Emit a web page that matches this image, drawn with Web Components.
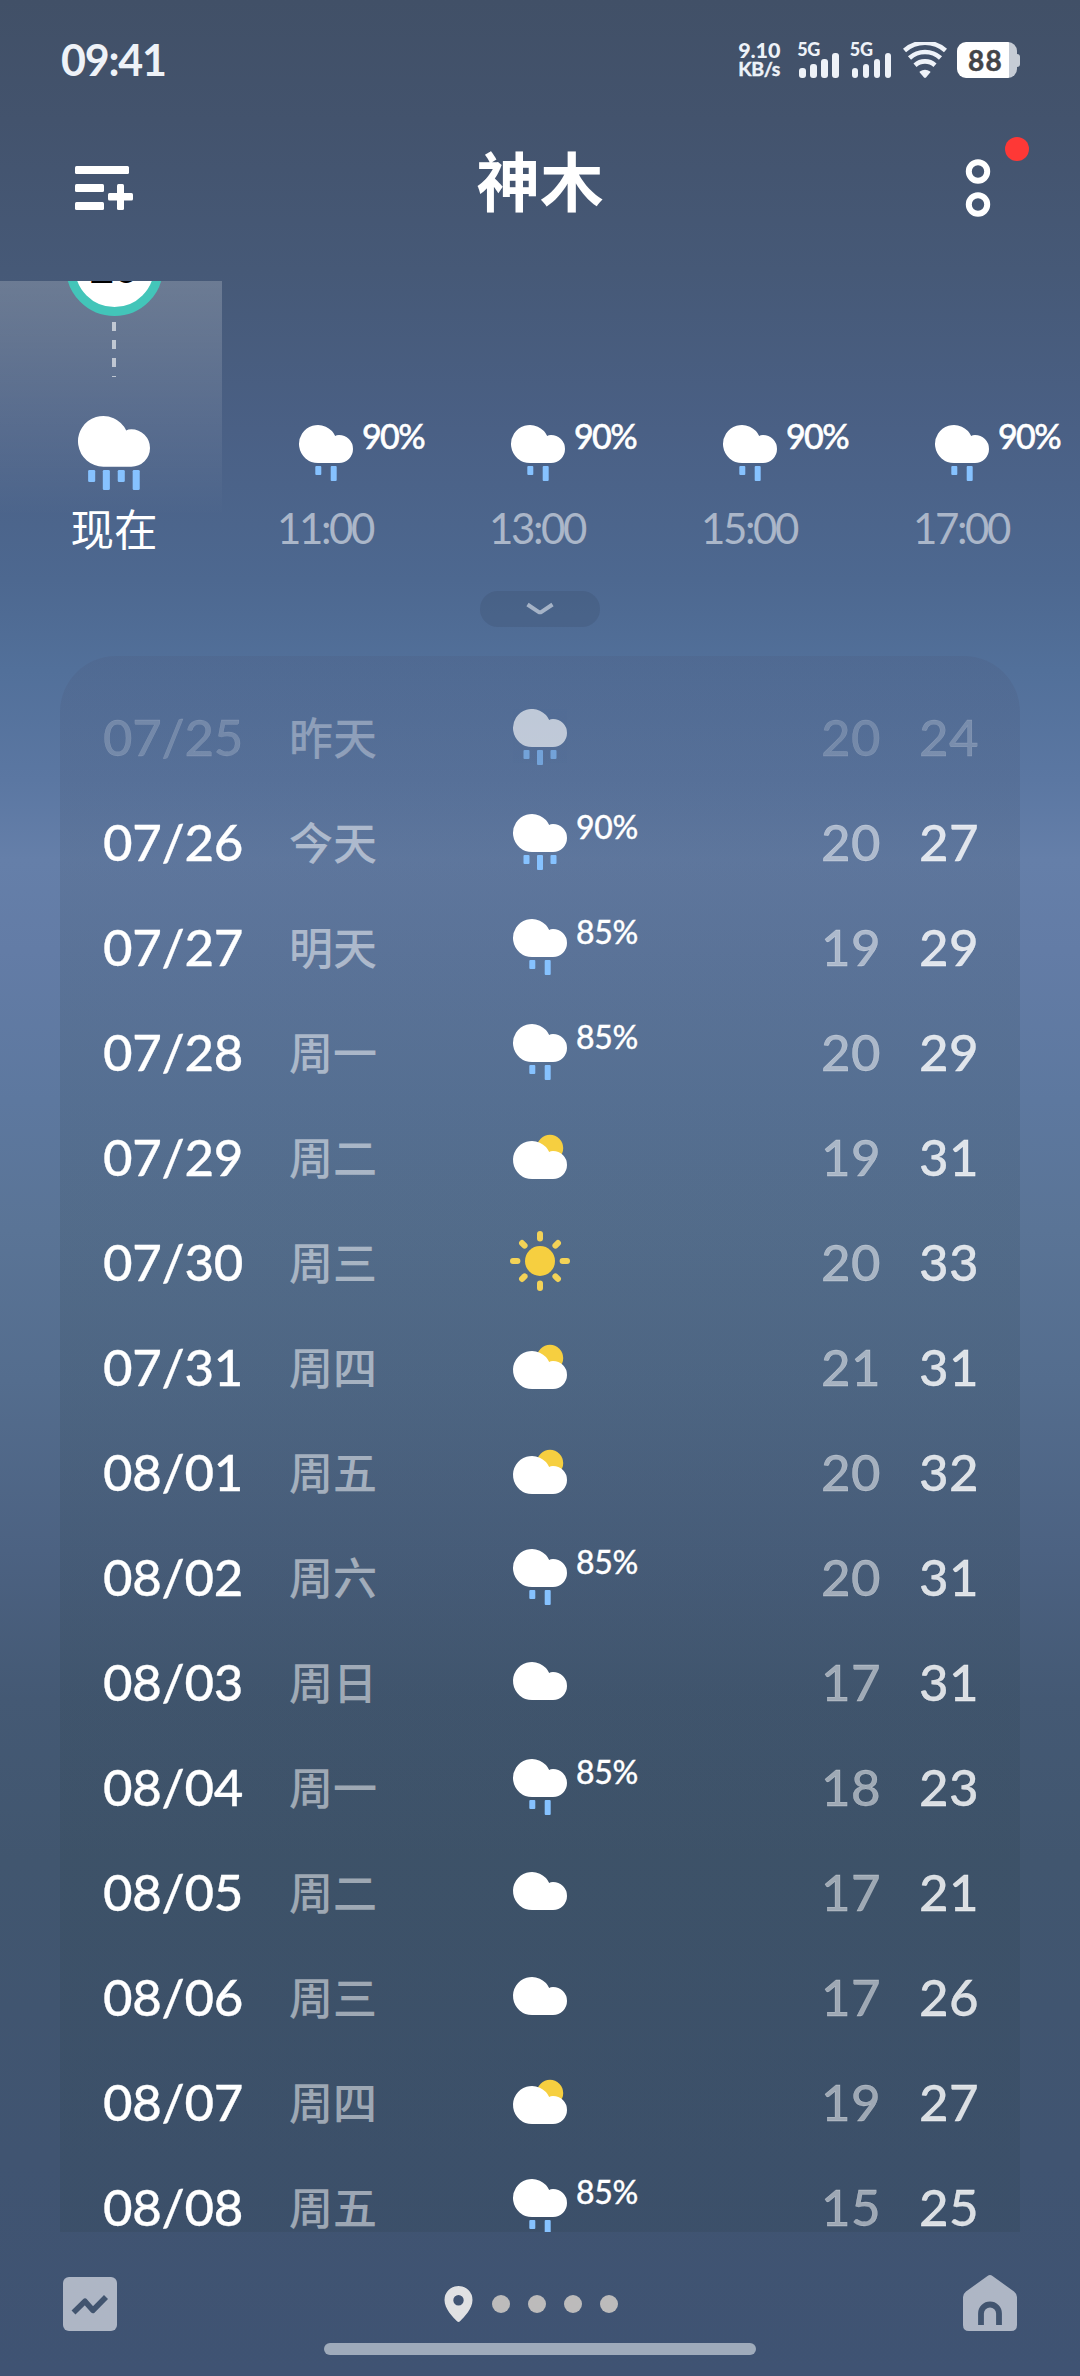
<!DOCTYPE html>
<html lang="zh-CN">
<head>
<meta charset="utf-8">
<title>神木</title>
<style>
html,body{margin:0;padding:0}
body{width:1080px;height:2376px;overflow:hidden;font-family:Lato,"Noto Sans CJK SC",sans-serif;color:#fff}
</style>
</head>
<body>
<weather-app></weather-app>
<script>
class Base extends HTMLElement{
  constructor(){super();this.attachShadow({mode:'open'})}
  connectedCallback(){this.shadowRoot.innerHTML=this.view()}
}
const define=(name,view)=>customElements.define(name,class extends Base{view(){return view(this)}});

const drop=(x,y,long)=>`<rect x="${x-3}" y="${y}" width="6" height="${long?15:9}" rx="1" fill="#86c2ff"/>`;
const cloud=(dy)=>`<path transform="translate(0 ${dy})" fill="#fff" d="M22 41A19 19 0 1 1 39.2 13.9Q40.5 13 43 13A14 14 0 0 1 43 41Z"/>`;
const icons={
  heavy:cloud(0)+`<g fill="#86c2ff"><rect x="10.6" y="43.5" width="5.3" height="9" rx="1"/><rect x="21.6" y="43.5" width="5.3" height="15" rx="1"/><rect x="32.8" y="43.5" width="5.3" height="9" rx="1"/><rect x="44" y="43.5" width="5.3" height="15" rx="1"/></g>`,
  rain3:cloud(0)+drop(16.5,44,0)+drop(30,44,1)+drop(43.5,44,0),
  rain:cloud(0)+drop(22.3,44,0)+drop(37.7,44,1),
  partly:`<circle cx="40" cy="22" r="13.2" fill="#f6cf40"/>`+cloud(12),
  cloudy:cloud(8),
  sun:`<circle cx="30" cy="30" r="15" fill="#f6cf40"/><g stroke="#f3d257" stroke-width="6" stroke-linecap="round">${[0,45,90,135,180,225,270,315].map(a=>`<path d="M30 ${a%90?4.6:3}v${a%90?3.6:4.4}" transform="rotate(${a} 30 30)"/>`).join('')}</g>`
};
define('weather-icon',e=>{
  const s=e.getAttribute('size')||60;
  return `<style>:host{display:block;width:${s}px;height:${s}px}svg{display:block}</style><svg width="${s}" height="${s}" viewBox="0 0 60 60">${icons[e.getAttribute('kind')]}</svg>`;
});

define('signal-bars',()=>`<style>:host{display:flex;flex-direction:column;width:52.7px;height:36px;color:#eef2f8}
b{font:900 18px/14px Lato,sans-serif;height:11px;letter-spacing:-.2px}
div{display:flex;gap:4.5px;align-items:flex-end;height:25px;padding-left:2px}
i{width:6.5px;border-radius:3px;background:#eef2f8}</style>
<b>5G</b><div><i style="height:10px"></i><i style="height:14px"></i><i style="height:19px"></i><i style="height:25px"></i></div>`);

define('status-bar',()=>`<style>:host{display:flex;align-items:flex-start;height:119px;box-sizing:border-box;padding:42px 60px 0 61px;color:#eef2f8}
.t{font:700 43px/36px Lato,sans-serif;letter-spacing:-1.2px;flex:1}
.s{width:59px;font:900 21.5px/20px Lato,sans-serif;letter-spacing:-.1px;margin-top:-2px}
.s div+div{font-size:19.5px;font-weight:700;letter-spacing:-.3px;line-height:18px;-webkit-text-stroke:.4px #eef2f8}
signal-bars{flex:none}
.b{display:flex;align-items:center;margin-left:10px}
.c{width:60px;height:36px;border-radius:9px;background:linear-gradient(90deg,#fff 52px,#c6ccd5 52px);color:#424448;font:700 28px/37px Lato,sans-serif;letter-spacing:1.2px;text-indent:11px;-webkit-text-stroke:.5px #424448}
.n{width:3px;height:13px;background:#c6ccd5;border-radius:0 3px 3px 0}
svg{display:block}</style>
<div class="t">09:41</div><div class="s"><div>9.10</div><div>KB/s</div></div><signal-bars></signal-bars><signal-bars></signal-bars>
<svg width="44" height="36" viewBox="0 0 44 36" fill="none" stroke="#eef2f8" stroke-width="4.6" style="margin-left:.5px"><path d="M1.5 8.5A31 31 0 0 1 42.5 8.5"/><path d="M6.5 16A23 23 0 0 1 37.5 16"/><path d="M12 23.2A15 15 0 0 1 32 23.2"/><path stroke="none" fill="#eef2f8" d="M16.8 29.5Q22 26 27.2 29.5Q27.6 30 27.2 30.6L23 35.5Q22 36.4 21 35.5L16.8 30.6Q16.4 30 16.8 29.5Z"/></svg>
<div class="b"><div class="c">88</div><div class="n"></div></div>`);

define('app-bar',()=>`<style>:host{display:flex;justify-content:space-between;align-items:center;height:162px;box-sizing:border-box;padding:0 51px 36px 75px}
h1{margin:0 0 7px;font:700 63.5px/119px "Noto Sans CJK SC",sans-serif}
svg{display:block;flex:none}.a{margin-top:12px}.m{width:82px;height:96px;display:flex}
.m svg{margin-left:-3px}
</style>
<svg class="a" width="58" height="44" viewBox="0 0 58 44" fill="#fff"><rect y="0" width="54" height="8" rx="1.5"/><rect y="18" width="29" height="8" rx="1.5"/><rect y="36" width="29" height="8" rx="1.5"/><rect x="33" y="27" width="25" height="7.5" rx="1.5"/><rect x="42" y="18" width="7" height="26" rx="1.5"/></svg>
<h1>神木</h1>
<div class="m"><svg width="92" height="96" viewBox="0 0 92 96"><g fill="none" stroke="#fff" stroke-width="6"><circle cx="34" cy="37.5" r="9.2"/><circle cx="34" cy="70.5" r="9.2"/></g><circle cx="73" cy="15" r="12" fill="#fe3836"/></svg></div>`);

define('hour-item',e=>{
  const p=e.getAttribute('rain'),now=e.hasAttribute('now');
  return `<style>:host{display:flex;flex-direction:column;width:212px;height:290px;flex:none}
.top{height:${now?131:141}px;position:relative;display:flex;flex-direction:column;align-items:center}
.mid{display:flex;justify-content:center;height:${now?88:78}px}
.w{width:60px;display:flex}
.w span{font:500 34px/27px Lato,sans-serif;padding-left:6px;letter-spacing:-1.6px;-webkit-text-stroke:.5px #fff}
.l{text-align:center;${now?'font:400 43.5px/56px "Noto Sans CJK SC",sans-serif':'font:400 42px/57px Lato,sans-serif;letter-spacing:-2.4px;word-spacing:0;text-indent:-2px;color:#fff8'}}
</style><div class="top"><slot></slot></div><div class="mid"><div class="w" style="${now?'width:80px':''}"><weather-icon style="flex:none" kind="${e.getAttribute('kind')}" size="${now?80:60}"></weather-icon>${p?`<span>${p}%</span>`:''}</div></div><div class="l">${e.getAttribute('label')}</div>`;
});

define('aqi-dial',()=>`<style>:host{display:flex;flex-direction:column;align-items:center}
.d{width:79px;height:79px;border:9px solid #43c5b9;border-radius:50%;background:#fff;margin-top:-62px;color:#000;font:700 42px/78px Lato,sans-serif;text-align:center}
svg{display:block;margin-top:6px}</style><div class="d">20</div><svg width="4" height="55"><path d="M2 0V55" stroke="#fff" stroke-opacity=".6" stroke-width="4" stroke-dasharray="9 9"/></svg>`);

define('hourly-strip',()=>`<style>:host{display:flex;height:310px;overflow:hidden;padding-left:8px;box-sizing:border-box;background:linear-gradient(180deg,rgba(255,255,255,.205),rgba(255,255,255,0) 235px) 0 0/222px 240px no-repeat}
</style><hour-item now kind="heavy" label="现在"><aqi-dial></aqi-dial></hour-item>${[11,13,15,17].map(h=>`<hour-item kind="rain" rain="90" label="${h}:00"></hour-item>`).join('')}`);

define('expand-pill',()=>`<style>:host{display:flex;justify-content:center;height:65px}
div{width:120px;height:36px;border-radius:18px;background:rgba(50,60,85,.17);display:flex;justify-content:center;align-items:center}</style>
<div><svg width="28" height="14" viewBox="0 0 28 14"><path d="M1.500 2.500L12.500 9.800Q14 10.800 15.500 9.800L26.500 2.500" fill="none" stroke="#a5b3c7" stroke-width="4"/></svg></div>`);

define('day-row',e=>{
  const a=n=>e.getAttribute(n),old=a('day')==='昨天';
  return `<style>:host{display:flex;align-items:center;height:105px;flex:none;font:500 51px/101px Lato,sans-serif;padding:0 22px 0 43px}
:host>*{flex:none}
.date{width:186px;letter-spacing:-.3px;color:${old?'#ffffff30':'#fff'}}
.day{font:500 44px/101px "Noto Sans CJK SC",sans-serif;width:221px;color:rgba(255,255,255,${old?.34:.5})}
.date,.day,.lo,.hi{height:105px}
weather-icon{margin-top:-4px;opacity:${old?.63:1}}
.p{width:251px;font-size:32px;line-height:36px;letter-spacing:-.3px;padding-left:6px;margin-top:-33px;box-sizing:border-box}
.lo,.hi{letter-spacing:.5px}
.lo{width:98px;color:${old?'#ffffff30':'#ffffff80'}}.hi{color:${old?'#ffffff38':'#ffffffd0'};width:59px}
.date,.p,.lo,.hi{-webkit-text-stroke:.3px}
</style><div class="date">${a('date')}</div><div class="day">${a('day')}</div><weather-icon kind="${a('kind')}"></weather-icon><div class="p">${a('rain')?a('rain')+'%':''}</div><div class="lo">${a('lo')}</div><div class="hi">${a('hi')}</div>`;
});

const days=[['07/25','昨天','rain3','',20,24],['07/26','今天','rain3',90,20,27],['07/27','明天','rain',85,19,29],['07/28','周一','rain',85,20,29],['07/29','周二','partly','',19,31],['07/30','周三','sun','',20,33],['07/31','周四','partly','',21,31],['08/01','周五','partly','',20,32],['08/02','周六','rain',85,20,31],['08/03','周日','cloudy','',17,31],['08/04','周一','rain',85,18,23],['08/05','周二','cloudy','',17,21],['08/06','周三','cloudy','',17,26],['08/07','周四','partly','',19,27],['08/08','周五','rain',85,15,25]];
define('daily-card',()=>`<style>:host{display:flex;flex-direction:column;height:1576px;margin:0 60px;box-sizing:border-box;padding-top:29.5px;overflow:hidden;border-radius:56px 56px 0 0;background:linear-gradient(180deg,rgba(70,70,100,.12),rgba(42,62,72,.15) 300px,rgba(42,62,72,.19))}</style>
${days.map(d=>`<day-row date="${d[0]}" day="${d[1]}" kind="${d[2]}" rain="${d[3]}" lo="${d[4]}" hi="${d[5]}"></day-row>`).join('')}`);

define('bottom-bar',()=>`<style>:host{display:flex;flex-direction:column;height:144px}
.r{display:flex;justify-content:space-between;align-items:flex-end;padding:0 63px;height:99px}
.g{width:432px;height:12px;border-radius:6px;background:#9fabbb;margin:12px auto 0}svg{display:block}
.p{display:flex;align-items:center;gap:18px;padding:0 18px 9px 0}.p i{width:18px;height:18px;border-radius:50%;background:#bcbbbb}.p svg{margin-right:1px}
</style><div class="r">
<svg width="54" height="54" viewBox="0 0 54 54"><rect width="54" height="54" rx="6" fill="#aeb6c5"/><path d="M10.5 35.5L22 24.3L30 33.3L43 20" fill="none" stroke="#41546f" stroke-width="5.6" stroke-linejoin="round"/></svg>
<div class="p"><svg width="29" height="36" viewBox="0 0 29 36"><path fill="#e0e1e3" fill-rule="evenodd" d="M14.5 0A14 14 0 0 1 28.5 14C28.5 23 20 31 16 35.2Q14.5 36.6 13 35.2C9 31 .5 23 .5 14A14 14 0 0 1 14.5 0ZM14.5 9A5.2 5.2 0 1 0 14.5 19.4A5.2 5.2 0 1 0 14.5 9Z"/></svg><i></i><i></i><i></i><i></i></div>
<svg width="54" height="56" viewBox="0 0 54 56"><path fill="#aeb6c5" d="M24.5 1Q27 -1 29.5 1L51 16.500Q54 19 54 22V50Q54 56 48 56H6Q0 56 0 50V22Q0 19 3 16.500Z"/><path d="M18 50V38.500A9 9 0 0 1 36 38.500V50" fill="none" stroke="#41546f" stroke-width="5.8"/></svg>
</div><div class="g"></div>`);

define('weather-app',()=>`<style>:host{display:flex;flex-direction:column;width:1080px;height:2376px;overflow:hidden;
background:linear-gradient(180deg,#415067 0,#43536d 120px,#465977 270px,#4a6085 430px,#4d6890 580px,#52709a 670px,#5b77a2 780px,#657fa9 860px,#637ca6 950px,#5d789f 1100px,#5a7496 1230px,#546d8e 1380px,#4c6282 1550px,#445974 1700px,#41566f 1860px,#405471 2160px,#3f5373 2376px)}</style>
<status-bar></status-bar><app-bar></app-bar><hourly-strip></hourly-strip><expand-pill></expand-pill><daily-card></daily-card><bottom-bar></bottom-bar>`);
</script>
</body>
</html>
